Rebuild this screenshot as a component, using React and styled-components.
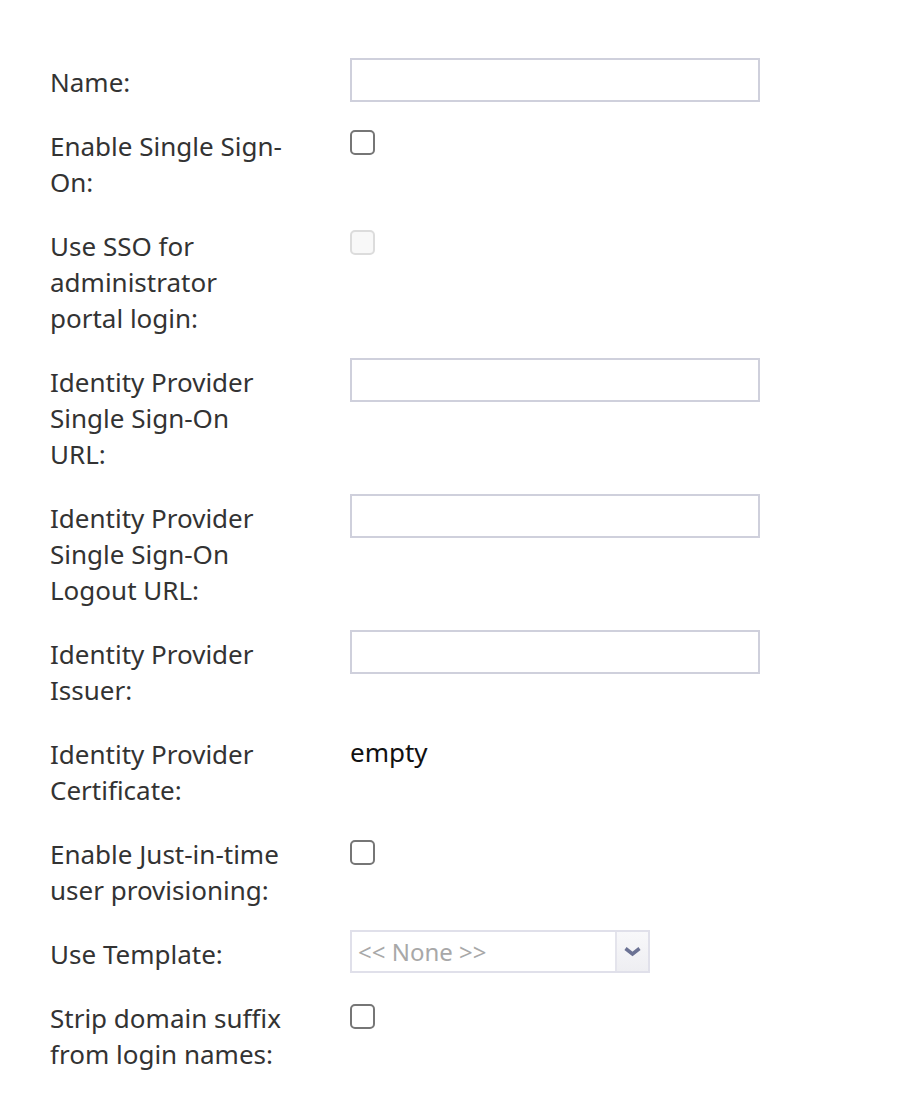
import styled, { createGlobalStyle } from "styled-components";

const GlobalStyle = createGlobalStyle`
    body {
        margin: 0;
        background: #fff;
        font-family: "Noto Sans", "Open Sans", sans-serif;
    }
`;

const Form = styled.div`
    display: grid;
    grid-template-columns: 300px 410px;
    row-gap: 21px;
    padding: 58px 0 40px 50px;
`;

const Label = styled.div`
    width: 238px;
    padding: 6px 0 1px;
    font-size: 26px;
    line-height: 36px;
    color: #333;
`;

const Cell = styled.div`
    display: flex;
    align-items: flex-start;
`;

const TextInput = styled.input`
    box-sizing: border-box;
    width: 410px;
    height: 44px;
    margin: 0 0 -1px;
    border: 2px solid #cfd0dc;
    background: #fff;
    outline: none;
`;

const Check = styled.span`
    box-sizing: border-box;
    display: block;
    width: 25px;
    height: 25px;
    margin-top: ${(p) => p.$top || 9}px;
    border: 2px solid ${(p) => (p.$disabled ? "#dcdcdc" : "#767676")};
    border-radius: 5px;
    background: ${(p) => (p.$disabled ? "#f8f8f8" : "#fff")};
`;

const Value = styled.div`
    padding-top: 4px;
    font-size: 26px;
    line-height: 36px;
    color: #111;
`;

const Select = styled.div`
    box-sizing: border-box;
    display: flex;
    width: 300px;
    height: 43px;
    border: 2px solid #e0e0ea;
    background: #fff;
`;

const SelectText = styled.div`
    flex: 1;
    padding-left: 6px;
    font-size: 24px;
    line-height: 39px;
    color: #a8a8a8;
`;

const SelectButton = styled.div`
    width: 31px;
    display: flex;
    align-items: center;
    justify-content: center;
    border-left: 2px solid #e4e4ec;
    background: linear-gradient(#f8f8fa, #eeeef2);
`;

const Chevron = () => (
    <svg width="17" height="11" viewBox="0 0 17 11">
        <path d="M1.5 2.5 L8.5 8 L15.5 2.5" fill="none" stroke="#6b7294" strokeWidth="3.5" />
    </svg>
);

const App = () => {
    return (
        <>
            <GlobalStyle />
            <Form>
                <Label>Name:</Label>
                <Cell><TextInput type="text" /></Cell>

                <Label>Enable Single Sign-On:</Label>
                <Cell><Check $top={8} /></Cell>

                <Label>Use SSO for administrator portal login:</Label>
                <Cell><Check $disabled $top={8} /></Cell>

                <Label>Identity Provider Single Sign-On URL:</Label>
                <Cell><TextInput type="text" /></Cell>

                <Label>Identity Provider Single Sign-On Logout URL:</Label>
                <Cell><TextInput type="text" /></Cell>

                <Label>Identity Provider Issuer:</Label>
                <Cell><TextInput type="text" /></Cell>

                <Label>Identity Provider Certificate:</Label>
                <Cell><Value>empty</Value></Cell>

                <Label>Enable Just-in-time user provisioning:</Label>
                <Cell><Check $top={10} /></Cell>

                <Label>Use Template:</Label>
                <Cell>
                    <Select>
                        <SelectText>&lt;&lt; None &gt;&gt;</SelectText>
                        <SelectButton><Chevron /></SelectButton>
                    </Select>
                </Cell>

                <Label>Strip domain suffix from login names:</Label>
                <Cell><Check $top={10} /></Cell>
            </Form>
        </>
    );
};

export default App;
